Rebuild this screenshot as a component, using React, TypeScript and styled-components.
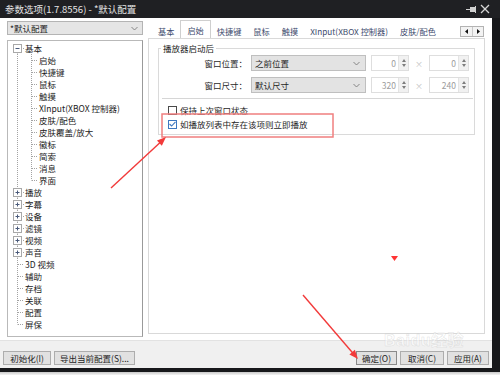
import React from 'react';
import styled, { createGlobalStyle } from 'styled-components';

const FONT = `"Noto Sans CJK SC", "Noto Sans", sans-serif`;

const GlobalStyle = createGlobalStyle`
  html, body { margin: 0; padding: 0; background: #fff; }
  body { font-family: ${FONT}; }
  * { box-sizing: border-box; }
`;

const Page = styled.div`
  position: relative;
  width: 500px;
  height: 375px;
  overflow: hidden;
  background: #fff;
  font-family: ${FONT};
`;

const Window = styled.div`
  display: flex;
  flex-direction: column;
  width: 500px;
`;

const TitleBar = styled.div`
  height: 18px;
  background: #1f2023;
  display: flex;
  align-items: center;
  padding-left: 5px;
  color: #e4e4e4;
  font-size: 9.5px;
`;

const TitleText = styled.div`
  flex: 1;
  line-height: 18px;
  white-space: nowrap;
`;

const TitleButtons = styled.div`
  display: flex;
  align-items: center;
  gap: 3px;
  padding-right: 10px;
`;

const Frame = styled.div`
  height: 354px;
  border-right: 8px solid #17181b;
  border-bottom: 4px solid #17181b;
  background: #fff;
  display: flex;
  flex-direction: column;
`;

const Shadow = styled.div`
  height: 3px;
  background: linear-gradient(#c8c8c8, #f4f4f4);
`;

const Main = styled.div`
  height: 322px;
  display: flex;
  padding-top: 3px;
`;

const LeftCol = styled.div`
  width: 143px;
  padding-left: 7px;
  display: flex;
  flex-direction: column;
  gap: 5px;
`;

const Select = styled.div<{ $w: number }>`
  width: ${(p) => p.$w}px;
  height: 14px;
  background: #e5e5e5;
  border: 1px solid #b4b4b4;
  display: flex;
  align-items: center;
  justify-content: space-between;
  padding: 0 4px 0 2px;
  font-size: 8.5px;
  color: #1e1e1e;
  line-height: 12px;
  flex-shrink: 0;
`;

const TreeBox = styled.div`
  height: 297px;
  width: 136px;
  border: 1px solid #b9b9b9;
  border-right-color: #9a9a9a;
  padding-top: 1px;
  padding-left: 2px;
  background: #fff;
`;

const TreeRowEl = styled.div`
  display: flex;
  align-items: center;
  height: 12px;
  font-size: 8.5px;
  color: #1c1c1c;
  white-space: nowrap;
`;

const TreeLabel = styled.span`
  line-height: 12px;
  padding-left: 1px;
`;

const RightCol = styled.div`
  width: 337px;
  margin-left: 5px;
  margin-top: -1px;
  display: flex;
  flex-direction: column;
`;

const TabStrip = styled.div`
  height: 18px;
  display: flex;
  align-items: flex-end;
  padding-left: 4px;
`;

const Tabs = styled.div`
  flex: 1;
  display: flex;
  align-items: flex-end;
  overflow: hidden;
  height: 18px;
`;

const Tab = styled.div<{ $active?: boolean }>`
  position: relative;
  z-index: ${(p) => (p.$active ? 1 : 0)};
  height: ${(p) => (p.$active ? 19 : 16)}px;
  margin-bottom: ${(p) => (p.$active ? -1 : 0)}px;
  padding: 0 ${(p) => (p.$active ? 6 : 5)}px;
  background: #fff;
  border: ${(p) => (p.$active ? '1px solid #cfcfcf' : '1px solid transparent')};
  border-bottom: none;
  font-size: 8.2px;
  line-height: 14px;
  color: #3d4a6c;
  white-space: nowrap;
  display: flex;
  align-items: center;
  flex-shrink: 0;
`;

const ScrollArrows = styled.div`
  display: flex;
  margin: 0 1px 1px 6px;
  border: 1px solid #b3b3b3;
  background: #f3f3f3;
  height: 11px;
  flex-shrink: 0;
`;

const ScrollArrow = styled.div<{ $first?: boolean }>`
  width: 11px;
  height: 9px;
  display: flex;
  align-items: center;
  justify-content: center;
  border-left: ${(p) => (p.$first ? 'none' : '1px solid #c9c9c9')};
`;

const Panel = styled.div`
  height: 296px;
  border: 1px solid #d9d9d9;
  background: #fff;
  padding: 3px 0 0 9px;
`;

const Group = styled.fieldset`
  margin: 0;
  width: 317px;
  min-width: 0;
  padding: 0 5px 3px 6px;
  border: 1px solid #dadada;
`;

const Legend = styled.legend`
  padding: 0 2px;
  margin-left: -4px;
  font-size: 8.5px;
  line-height: 12px;
  color: #222;
`;

const Rows = styled.div`
  display: flex;
  flex-direction: column;
  gap: 6px;
  padding-top: 1px;
`;

const FieldRow = styled.div`
  display: flex;
  align-items: center;
  height: 16px;
`;

const FieldLabel = styled.div`
  width: 82px;
  text-align: right;
  font-size: 8.5px;
  color: #2a2a2a;
  line-height: 12px;
  white-space: nowrap;
`;

const Combo = styled.div`
  width: 115px;
  height: 16px;
  margin-left: 4px;
  background: #e3e3e3;
  border: 1px solid #bfbfbf;
  display: flex;
  align-items: center;
  justify-content: space-between;
  padding: 0 5px 0 3px;
  font-size: 8.5px;
  color: #1e1e1e;
  line-height: 12px;
`;

const Spin = styled.div<{ $w: number; $ml: number }>`
  width: ${(p) => p.$w}px;
  height: 16px;
  margin-left: ${(p) => p.$ml}px;
  border: 1px solid #dedede;
  background: #fff;
  display: flex;
`;

const SpinValue = styled.div`
  flex: 1;
  text-align: right;
  padding-right: 2px;
  font-size: 8.5px;
  line-height: 14px;
  color: #9c9c9c;
`;

const SpinButtons = styled.div`
  width: 10px;
  background: #f1f1f1;
  border-left: 1px solid #e4e4e4;
  display: flex;
  flex-direction: column;
  align-items: center;
  justify-content: space-evenly;
`;

const Times = styled.div`
  width: 20px;
  text-align: center;
  font-size: 8px;
  color: #c2c2c2;
`;

const Separator = styled.div`
  height: 1px;
  background: #d6d6d6;
  margin: 5px -4px 0 -3px;
`;

const Checks = styled.div`
  display: flex;
  flex-direction: column;
  padding: 4px 0 0 3px;
`;

const CheckRow = styled.div`
  display: flex;
  align-items: center;
  gap: 3px;
  height: 14px;
  font-size: 8.5px;
  color: #1e1e1e;
  line-height: 12px;
  white-space: nowrap;
`;

const Box = styled.div<{ $checked?: boolean }>`
  width: 9px;
  height: 9px;
  border: 1px solid ${(p) => (p.$checked ? '#3f78c0' : '#4a4a4a')};
  background: #fff;
  display: flex;
  align-items: center;
  justify-content: center;
`;

const Footer = styled.div`
  height: 28px;
  display: flex;
  align-items: flex-start;
  padding: 10px 3px 0 3px;
  background: #f0f0f0;
  border-top: 1px solid #e2e2e2;
  gap: 3px;
`;

const Btn = styled.div<{ $w: number; $default?: boolean }>`
  width: ${(p) => p.$w}px;
  height: 14px;
  border: 1px solid ${(p) => (p.$default ? '#8a8a8a' : '#adadad')};
  background: #e1e1e1;
  font-size: 8.5px;
  line-height: 12px;
  color: #1e1e1e;
  text-align: center;
  white-space: nowrap;
`;

const Spacer = styled.div`
  flex: 1;
`;

const Overlay = styled.svg`
  position: absolute;
  left: 0;
  top: 0;
  pointer-events: none;
`;

const Watermark = styled.div`
  position: absolute;
  left: 384px;
  top: 332px;
  font-family: "Liberation Sans", ${FONT};
  font-size: 16px;
  line-height: 17px;
  font-weight: bold;
  color: rgba(255, 255, 255, 0.55);
  -webkit-text-stroke: 0.5px rgba(190, 190, 190, 0.45);
  letter-spacing: 0.5px;
  pointer-events: none;
`;

const Chevron = ({ color = '#7a7a7a' }: { color?: string }) => (
  <svg width="7" height="5" viewBox="0 0 7 5">
    <polyline points="0.5,1 3.5,4 6.5,1" fill="none" stroke={color} strokeWidth="0.9" />
  </svg>
);

const Tri = ({ up }: { up?: boolean }) => (
  <svg width="4" height="3" viewBox="0 0 4 3">
    <polygon points={up ? '0,3 4,3 2,0' : '0,0 4,0 2,3'} fill="#7d7d7d" />
  </svg>
);

type Conn = 'pass' | 'tee' | 'elbow' | 'boxFirst' | 'box' | 'none';

const Connector = ({ kind, plus }: { kind: Conn; plus?: boolean }) => {
  const c = '#a3a3a3';
  const d = '1 1';
  return (
    <svg width="14" height="12" viewBox="0 0 14 12" style={{ flexShrink: 0 }}>
      {kind === 'pass' && <line x1="7.5" y1="0" x2="7.5" y2="12" stroke={c} strokeDasharray={d} />}
      {kind === 'tee' && (
        <>
          <line x1="7.5" y1="0" x2="7.5" y2="12" stroke={c} strokeDasharray={d} />
          <line x1="8" y1="6.5" x2="14" y2="6.5" stroke={c} strokeDasharray={d} />
        </>
      )}
      {kind === 'elbow' && (
        <>
          <line x1="7.5" y1="0" x2="7.5" y2="6.5" stroke={c} strokeDasharray={d} />
          <line x1="8" y1="6.5" x2="14" y2="6.5" stroke={c} strokeDasharray={d} />
        </>
      )}
      {(kind === 'box' || kind === 'boxFirst') && (
        <>
          {kind === 'box' && <line x1="7.5" y1="0" x2="7.5" y2="2.5" stroke={c} strokeDasharray={d} />}
          <line x1="7.5" y1="10.5" x2="7.5" y2="12" stroke={c} strokeDasharray={d} />
          <line x1="11" y1="6.5" x2="14" y2="6.5" stroke={c} strokeDasharray={d} />
          <rect x="3.5" y="2.5" width="8" height="8" fill="#fff" stroke="#a8a8a8" />
          <line x1="5.5" y1="6.5" x2="9.5" y2="6.5" stroke="#4a5a7a" />
          {plus && <line x1="7.5" y1="4.5" x2="7.5" y2="8.5" stroke="#4a5a7a" />}
        </>
      )}
    </svg>
  );
};

type Node = { label: string; cells: { kind: Conn; plus?: boolean }[] };

const children = ['启始', '快捷键', '鼠标', '触摸', 'XInput(XBOX 控制器)', '皮肤/配色', '皮肤覆盖/放大', '徽标', '简索', '消息', '界面'];
const expandables = ['播放', '字幕', '设备', '滤镜', '视频', '声音'];
const leaves = ['3D 视频', '辅助', '存档', '关联', '配置', '屏保'];

const tree: Node[] = [
  { label: '基本', cells: [{ kind: 'boxFirst' }] },
  ...children.map((l, i) => ({
    label: l,
    cells: [{ kind: 'pass' as Conn }, { kind: (i === children.length - 1 ? 'elbow' : 'tee') as Conn }],
  })),
  ...expandables.map((l) => ({ label: l, cells: [{ kind: 'box' as Conn, plus: true }] })),
  ...leaves.map((l, i) => ({ label: l, cells: [{ kind: (i === leaves.length - 1 ? 'elbow' : 'tee') as Conn }] })),
];

const tabs = ['基本', '启始', '快捷键', '鼠标', '触摸', 'XInput(XBOX 控制器)', '皮肤/配色'];

const arrow = (x1: number, y1: number, x2: number, y2: number) => {
  const dx = x2 - x1;
  const dy = y2 - y1;
  const len = Math.hypot(dx, dy);
  const ux = dx / len;
  const uy = dy / len;
  const hl = 9;
  const hw = 3.6;
  const bx = x2 - ux * hl;
  const by = y2 - uy * hl;
  const pts = `${x2},${y2} ${bx - uy * hw},${by + ux * hw} ${bx + uy * hw},${by - ux * hw}`;
  return (
    <>
      <line x1={x1} y1={y1} x2={bx + ux * 1} y2={by + uy * 1} stroke="#f23a3a" strokeWidth="1.4" />
      <polygon points={pts} fill="#f23a3a" />
    </>
  );
};

export default function App() {
  return (
    <Page>
      <GlobalStyle />
      <Window>
        <TitleBar>
          <TitleText>参数选项(1.7.8556) - *默认配置</TitleText>
          <TitleButtons>
            <svg width="11" height="9" viewBox="0 0 11 9">
              <rect x="4" y="2" width="5" height="5" fill="#d0d0d0" />
              <line x1="0" y1="4.5" x2="4" y2="4.5" stroke="#d0d0d0" strokeWidth="1" />
              <line x1="9.5" y1="1" x2="9.5" y2="8" stroke="#d0d0d0" strokeWidth="1" />
            </svg>
            <svg width="10" height="10" viewBox="0 0 10 10">
              <line x1="1" y1="1" x2="9" y2="9" stroke="#d6d6d6" strokeWidth="1.2" />
              <line x1="9" y1="1" x2="1" y2="9" stroke="#d6d6d6" strokeWidth="1.2" />
            </svg>
          </TitleButtons>
        </TitleBar>
        <Frame>
          <Main>
            <LeftCol>
              <Select $w={136}>
                <span>*默认配置</span>
                <Chevron />
              </Select>
              <TreeBox>
                {tree.map((n) => (
                  <TreeRowEl key={n.label}>
                    {n.cells.map((c, i) => (
                      <Connector key={i} kind={c.kind} plus={c.plus} />
                    ))}
                    <TreeLabel>{n.label}</TreeLabel>
                  </TreeRowEl>
                ))}
              </TreeBox>
            </LeftCol>
            <RightCol>
              <TabStrip>
                <Tabs>
                  {tabs.map((t, i) => (
                    <Tab key={t} $active={i === 1}>
                      {t}
                    </Tab>
                  ))}
                </Tabs>
                <ScrollArrows>
                  <ScrollArrow $first>
                    <svg width="3" height="5" viewBox="0 0 3 5">
                      <polygon points="3,0 3,5 0,2.5" fill="#111" />
                    </svg>
                  </ScrollArrow>
                  <ScrollArrow>
                    <svg width="3" height="5" viewBox="0 0 3 5">
                      <polygon points="0,0 0,5 3,2.5" fill="#111" />
                    </svg>
                  </ScrollArrow>
                </ScrollArrows>
              </TabStrip>
              <Panel>
                <Group>
                  <Legend>播放器启动后</Legend>
                  <Rows>
                    <FieldRow>
                      <FieldLabel>窗口位置：</FieldLabel>
                      <Combo>
                        <span>之前位置</span>
                        <Chevron />
                      </Combo>
                      <Spin $w={38} $ml={5}>
                        <SpinValue>0</SpinValue>
                        <SpinButtons>
                          <Tri up />
                          <Tri />
                        </SpinButtons>
                      </Spin>
                      <Times>×</Times>
                      <Spin $w={40} $ml={0}>
                        <SpinValue>0</SpinValue>
                        <SpinButtons>
                          <Tri up />
                          <Tri />
                        </SpinButtons>
                      </Spin>
                    </FieldRow>
                    <FieldRow>
                      <FieldLabel>窗口尺寸：</FieldLabel>
                      <Combo>
                        <span>默认尺寸</span>
                        <Chevron />
                      </Combo>
                      <Spin $w={38} $ml={5}>
                        <SpinValue>320</SpinValue>
                        <SpinButtons>
                          <Tri up />
                          <Tri />
                        </SpinButtons>
                      </Spin>
                      <Times>×</Times>
                      <Spin $w={40} $ml={0}>
                        <SpinValue>240</SpinValue>
                        <SpinButtons>
                          <Tri up />
                          <Tri />
                        </SpinButtons>
                      </Spin>
                    </FieldRow>
                  </Rows>
                  <Separator />
                  <Checks>
                    <CheckRow>
                      <Box />
                      <span>保持上次窗口状态</span>
                    </CheckRow>
                    <CheckRow>
                      <Box $checked>
                        <svg width="7" height="6" viewBox="0 0 7 6">
                          <polyline points="0.5,3 2.6,5 6.5,0.8" fill="none" stroke="#3f78c0" strokeWidth="1.1" />
                        </svg>
                      </Box>
                      <span>如播放列表中存在该项则立即播放</span>
                    </CheckRow>
                  </Checks>
                </Group>
              </Panel>
            </RightCol>
          </Main>
          <Footer>
            <Btn $w={48}>初始化(I)</Btn>
            <Btn $w={81}>导出当前配置(S)...</Btn>
            <Spacer />
            <Btn $w={41} $default>确定(O)</Btn>
            <Btn $w={44}>取消(C)</Btn>
            <Btn $w={42}>应用(A)</Btn>
          </Footer>
        </Frame>
        <Shadow />
      </Window>
      <Watermark>Baidu经验</Watermark>
      <Overlay width="500" height="375" viewBox="0 0 500 375">
        <rect x="162" y="114" width="171" height="23" fill="none" stroke="#f07f7f" strokeWidth="1.5" />
        {arrow(111, 188, 166, 137)}
        {arrow(303, 295, 358, 359)}
        <polygon points="391,256 398,256 394.5,261" fill="#ff3434" />
      </Overlay>
    </Page>
  );
}
